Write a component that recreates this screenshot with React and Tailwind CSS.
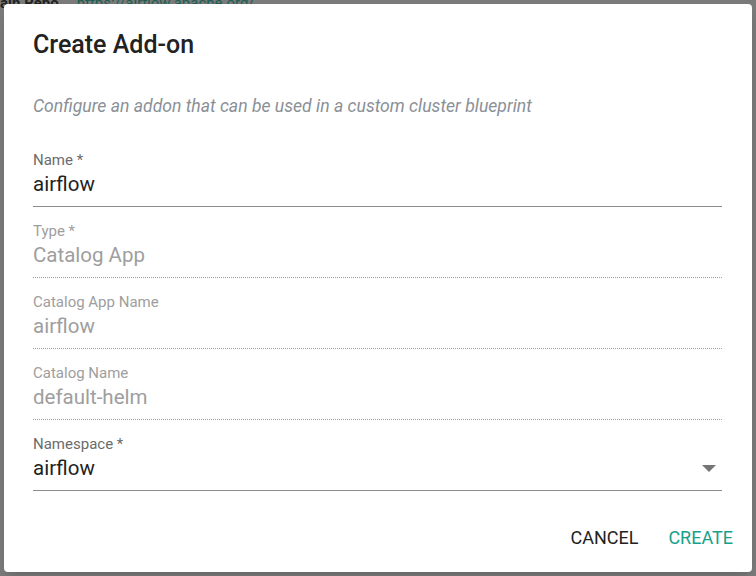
import React from "react";

function Field({ label, value, disabled, select }) {
  return (
    <div className={`relative pt-[9px] border-b ${disabled ? "border-dotted border-[#9e9e9e]" : "border-solid border-[#8c8c8c]"}`}>
      <div className={`text-[15px] leading-[20px] ${disabled ? "text-[#9e9e9e]" : "text-[#6b6b6b]"}`}>{label}</div>
      <div className={`text-[20.5px] leading-[28px] pb-[8px] ${disabled ? "text-[#9e9e9e]" : "text-[#222]"}`}>{value}</div>
      {select ? (
        <div className="absolute right-[6px] top-[40px] w-0 h-0 border-l-[7px] border-r-[7px] border-t-[7px] border-l-transparent border-r-transparent border-t-[#757575]" />
      ) : null}
    </div>
  );
}

export default function App() {
  return (
    <div className="w-[756px] h-[576px] bg-[#7a7a7a] relative overflow-hidden" style={{ fontFamily: "Roboto, 'Liberation Sans', sans-serif" }}>
      <div className="absolute left-0 top-[-6px] text-[15px] leading-[18px] text-[#222] font-bold whitespace-nowrap">
        <span>ain Repo</span>
        <span className="ml-[18px] font-normal text-[#1a5e52]">https://airflow.apache.org/</span>
      </div>
      <div className="absolute left-[4px] top-[4px] w-[748px] h-[568px] bg-white rounded-[4px] shadow-lg flex flex-col px-[29px]">
        <div className="pt-[26px] text-[25px] leading-[30px] font-medium text-[#222]">Create Add-on</div>
        <div className="mt-[34px] text-[17.6px] leading-[24px] italic text-[#8a9097]">
          Configure an addon that can be used in a custom cluster blueprint
        </div>
        <div className="mt-[23px] mr-[1px] flex flex-col gap-[5px]">
          <Field label="Name *" value="airflow" />
          <Field label="Type *" value="Catalog App" disabled />
          <Field label="Catalog App Name" value="airflow" disabled />
          <Field label="Catalog Name" value="default-helm" disabled />
          <Field label="Namespace *" value="airflow" select />
        </div>
        <div className="mt-auto mb-[22px] flex justify-end gap-[30px] mr-[-10px] text-[18px] leading-[24px]">
          <span className="text-[#222]">CANCEL</span>
          <span className="text-[#17a08a]">CREATE</span>
        </div>
      </div>
    </div>
  );
}
